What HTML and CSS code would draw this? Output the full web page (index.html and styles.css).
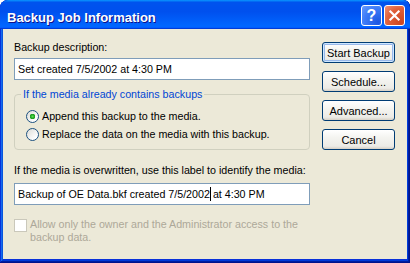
FILE: index.html
```html
<!DOCTYPE html>
<html lang="en">
<head>
  <meta charset="UTF-8" />
  <title>Backup Job Information</title>
  <link rel="stylesheet" href="styles.css">
</head>
<body>

  <div class="window">
    <div class="title-bar">
      <span class="title">Backup Job Information</span>
      <div class="title-buttons">
        <span class="tb-btn help">?</span>
        <span class="tb-btn close">
          <svg width="21" height="21" viewBox="0 0 21 21">
            <path d="M6 6 L15 15 M15 6 L6 15" stroke="#fff" stroke-width="2.4" stroke-linecap="square" fill="none"/>
          </svg>
        </span>
      </div>
    </div>

    <div class="dialog">
      <div class="main">
        <div class="label">Backup description:</div>
        <div class="field">Set created 7/5/2002 at 4:30 PM</div>

        <fieldset class="group">
          <legend>If the media already contains backups</legend>
          <div class="option"><span class="radio checked"></span>Append this backup to the media.</div>
          <div class="option"><span class="radio"></span>Replace the data on the media with this backup.</div>
        </fieldset>

        <div class="label label-gap">If the media is overwritten, use this label to identify the media:</div>
        <div class="field field-gap">Backup of OE Data.bkf created 7/5/2002<span class="caret"></span> at 4:30 PM</div>

        <div class="check disabled">
          <span class="box"></span>
          <span>Allow only the owner and the Administrator access to the<br>backup data.</span>
        </div>
      </div>

      <div class="actions">
        <button class="btn default">Start Backup</button>
        <button class="btn">Schedule...</button>
        <button class="btn">Advanced...</button>
        <button class="btn">Cancel</button>
      </div>
    </div>
  </div>

</body>
</html>
```

FILE: styles.css
```css
:root {
  --face: #ECE9D8;
  --text: #000;
  --field-border: #7F9DB9;
  --group-border: #D0D0BF;
  --group-title: #0046D5;
  --disabled: #ACA899;
  --btn-border: #003C74;
}

* {
  margin: 0;
  padding: 0;
  box-sizing: border-box;
}

body {
  background: #fff;
  font-family: 'Liberation Sans', Arial, sans-serif;
  font-size: 10.7px;
  line-height: 13px;
  color: var(--text);
}

.window {
  width: 410px;
  height: 263px;
  display: flex;
  flex-direction: column;
  background: #0831D9;
  border-radius: 8px 7px 0 0;
  box-shadow: inset -1px -1px #00138C, inset 1px 1px #0831D9,
              inset -2px -2px #001EA0, inset 2px 2px #166AEE,
              inset -3px -3px #003BDA, inset 3px 3px #0855DD;
  overflow: hidden;
}

.title-bar {
  height: 29px;
  flex: none;
  display: flex;
  align-items: center;
  justify-content: space-between;
  padding: 0 5px 0 7px;
  background: linear-gradient(180deg, #0997FF, #0053EE 8%, #0050EE 40%, #0066FF 88%, #0066FF 93%, #005BFF 95%, #003DD7 96%, #003DD7);
  border-radius: 8px 7px 0 0;
}

.title {
  padding-top: 5px;
  color: #fff;
  font-weight: bold;
  font-size: 13px;
  line-height: 15px;
  text-shadow: 1px 1px #0F1089;
}

.title-buttons {
  display: flex;
  gap: 2px;
  margin-top: 2px;
}

.tb-btn {
  width: 21px;
  height: 21px;
  border: 1px solid #fff;
  border-radius: 3px;
  display: flex;
  align-items: center;
  justify-content: center;
  color: #fff;
}

.help {
  background: radial-gradient(circle at 85% 85%, #1C56E2 0, #3D7BF7 60%, #6A9CFF 100%);
  font-weight: bold;
  font-size: 16px;
  line-height: 16px;
}

.close {
  background: radial-gradient(circle at 85% 85%, #CC4620 0, #E0603A 60%, #F29277 100%);
}

.dialog {
  flex: 1;
  margin: 0 3px 4px 3px;
  background: var(--face);
  display: flex;
  gap: 12px;
  padding-left: 11px;
}

.main {
  width: 296px;
  padding-top: 12px;
}

.label { white-space: nowrap; }

.label-gap { margin-top: 14px; }

.field {
  height: 22px;
  margin-top: 4px;
  border: 1px solid var(--field-border);
  background: #fff;
  padding: 0 3px;
  display: flex;
  align-items: center;
  white-space: pre;
}

.field-gap { margin-top: 6px; }

.caret {
  display: inline-block;
  width: 1px;
  height: 14px;
  margin-right: -1px;
  background: #000;
}

.group {
  margin-top: 8px;
  border: 1px solid var(--group-border);
  border-radius: 4px;
  padding: 9px 0 8px 6px;
  display: flex;
  flex-direction: column;
  gap: 5px;
}

.group legend {
  color: var(--group-title);
  padding: 0 2px;
}

.option {
  display: flex;
  align-items: center;
  gap: 3px;
  padding-left: 5px;
}

.radio {
  width: 13px;
  height: 13px;
  flex: none;
  border-radius: 50%;
  border: 1px solid #1C5180;
  background: linear-gradient(135deg, #DCDCD7, #fff 80%);
}

.radio.checked {
  background: radial-gradient(circle, #5EDE5A 0, #2AB22A 1.5px, #1E961E 2.6px, transparent 3px),
              linear-gradient(135deg, #DCDCD7, #fff 80%);
}

.check {
  margin-top: 13px;
  display: flex;
  align-items: flex-start;
  gap: 3px;
}

.check .box {
  width: 13px;
  height: 13px;
  flex: none;
  border: 1px solid #CAC8BB;
  background: #fff;
  margin-top: 1px;
}

.check.disabled { color: var(--disabled); }

.actions {
  padding-top: 13px;
  display: flex;
  flex-direction: column;
  gap: 8px;
}

.btn {
  width: 73px;
  height: 21px;
  font-family: inherit;
  font-size: 11px;
  color: var(--text);
  border: 1px solid var(--btn-border);
  border-radius: 3px;
  background: linear-gradient(180deg, #fff, #F4F4F0 40%, #ECEBE6 85%, #D6D0C5);
}

.btn.default {
  box-shadow: inset 0 0 0 1px #CEE7FF, inset 0 0 0 2px #98B8EA;
}
```
